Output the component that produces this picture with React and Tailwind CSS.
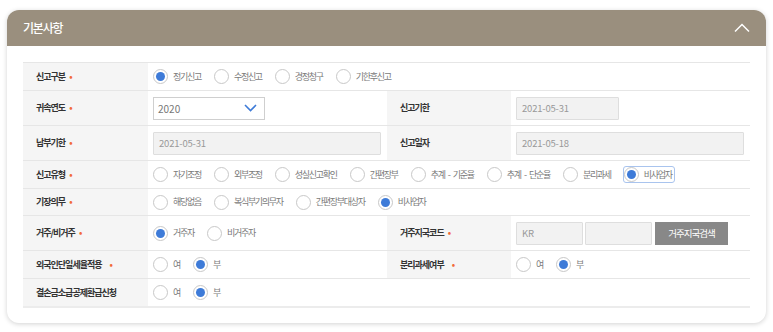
import React from 'react';

const font = { fontFamily: '"Noto Sans CJK KR", "Noto Sans", sans-serif' };

function Radio({ label, checked, focus }) {
	return (
		<label className={`flex items-center gap-[5px] mr-[13px] ${focus ? 'outline outline-1 outline-[#a9c4ee] rounded-[2px] pr-[2px]' : ''}`}>
			<span className="w-[15px] h-[15px] rounded-full border border-[#c8c8c8] bg-white flex items-center justify-center shrink-0">
				{checked && <span className="w-[9px] h-[9px] rounded-full bg-[#3e7bd8]" />}
			</span>
			<span className="text-[9px] tracking-[-1.3px] text-[#7a7a7a] whitespace-nowrap">{label}</span>
		</label>
	);
}

function Label({ children, req, wide }) {
	return (
		<div className="bg-[#f5f5f5] flex items-center pl-[13px] text-[9px] font-bold tracking-[-1px] text-[#333] whitespace-nowrap">
			{children}
			{req && <span className={`text-[#f26b3a] text-[9px] tracking-normal ${wide ? 'ml-[8px]' : 'ml-[4px]'}`}>•</span>}
		</div>
	);
}

function Ro({ value, w }) {
	return (
		<div className={`${w} h-[23px] bg-[#f2f2f2] border border-[#dedede] rounded-[1px] flex items-center pl-[5px] text-[9.5px] text-[#999] tracking-[-0.2px]`}>
			{value}
		</div>
	);
}

function Row({ h, children }) {
	return <div className={`grid grid-cols-[125px_239px_124px_1fr] border-t border-[#e6e6e6] ${h}`}>{children}</div>;
}

export default function App() {
	return (
		<div className="bg-white w-[773px] h-[332px] pt-[10px] px-[7px]" style={font}>
			<div className="rounded-[12px] bg-white shadow-[0_1px_5px_rgba(0,0,0,0.18)] overflow-hidden h-[313px]">
				<div className="h-[36px] bg-[#9a8f7e] flex items-center justify-between pl-[16px] pr-[16px]">
					<span className="text-white text-[12px] tracking-[-1.2px] font-medium">기본사항</span>
					<svg width="16" height="10" viewBox="0 0 16 10" fill="none">
						<path d="M1 8.5L8 1.5L15 8.5" stroke="white" strokeWidth="1.5" />
					</svg>
				</div>
				<div className="px-[16px] pt-[16px]">
					<div className="border-b-[2px] border-[#ececec]">
						<Row h="h-[28px]">
							<Label req>신고구분</Label>
							<div className="col-span-3 flex items-center pl-[5px]">
								<Radio label="정기신고" checked />
								<Radio label="수정신고" />
								<Radio label="경정청구" />
								<Radio label="기한후신고" />
							</div>
						</Row>
						<Row h="h-[35px]">
							<Label req>귀속연도</Label>
							<div className="flex items-center pl-[5px]">
								<div className="w-[112px] h-[23px] border border-[#cfcfcf] bg-white flex items-center justify-between pl-[4px] pr-[7px] text-[10px] text-[#777]">
									<span>2020</span>
									<svg width="13" height="8" viewBox="0 0 13 8" fill="none">
										<path d="M1 1L6.5 6.5L12 1" stroke="#3e7bd8" strokeWidth="1.6" />
									</svg>
								</div>
							</div>
							<Label>신고기한</Label>
							<div className="flex items-center pl-[5px]">
								<Ro value="2021-05-31" w="w-[103px]" />
							</div>
						</Row>
						<Row h="h-[35px]">
							<Label req>납부기한</Label>
							<div className="flex items-center pl-[5px] pr-[6px]">
								<Ro value="2021-05-31" w="w-full" />
							</div>
							<Label>신고일자</Label>
							<div className="flex items-center pl-[5px] pr-[6px]">
								<Ro value="2021-05-18" w="w-full" />
							</div>
						</Row>
						<Row h="h-[28px]">
							<Label req>신고유형</Label>
							<div className="col-span-3 flex items-center pl-[5px]">
								<Radio label="자기조정" />
								<Radio label="외부조정" />
								<Radio label="성실신고확인" />
								<Radio label="간편장부" />
								<Radio label={'추계\u2002-\u2002기준율'} />
								<Radio label={'추계\u2002-\u2002단순율'} />
								<Radio label="분리과세" />
								<Radio label="비사업자" checked focus />
							</div>
						</Row>
						<Row h="h-[27px]">
							<Label req>기장의무</Label>
							<div className="col-span-3 flex items-center pl-[5px]">
								<Radio label="해당없음" />
								<Radio label="복식부기의무자" />
								<Radio label="간편장부대상자" />
								<Radio label="비사업자" checked />
							</div>
						</Row>
						<Row h="h-[35px]">
							<Label req>거주/비거주</Label>
							<div className="flex items-center pl-[5px]">
								<Radio label="거주자" checked />
								<Radio label="비거주자" />
							</div>
							<Label req>거주지국코드</Label>
							<div className="flex items-center pl-[5px] gap-[2px]">
								<Ro value="KR" w="w-[67px]" />
								<Ro value="" w="w-[67px]" />
								<button className="ml-[1px] w-[73px] h-[23px] bg-[#888] text-white text-[9.5px] tracking-[-1px]">거주지국검색</button>
							</div>
						</Row>
						<Row h="h-[28px]">
							<Label req wide>외국인단일세율적용</Label>
							<div className="flex items-center pl-[5px]">
								<Radio label="여" />
								<Radio label="부" checked />
							</div>
							<Label req wide>분리과세여부</Label>
							<div className="flex items-center pl-[5px]">
								<Radio label="여" />
								<Radio label="부" checked />
							</div>
						</Row>
						<Row h="h-[28px]">
							<Label>결손금소급공제환급신청</Label>
							<div className="col-span-3 flex items-center pl-[5px]">
								<Radio label="여" />
								<Radio label="부" checked />
							</div>
						</Row>
					</div>
				</div>
			</div>
		</div>
	);
}
